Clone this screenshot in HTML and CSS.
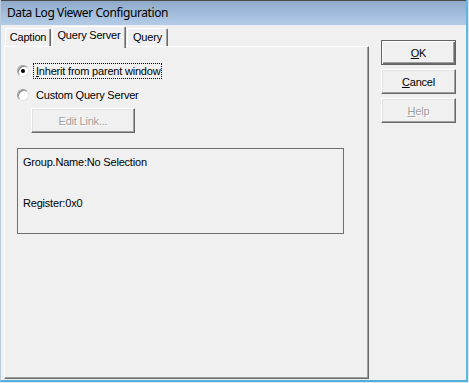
FILE: index.html
```html
<!DOCTYPE html>
<html lang="en">
<head>
    <meta charset="UTF-8">
    <title>Data Log Viewer Configuration</title>
    <link rel="stylesheet" href="styles.css">
</head>
<body>
    <div class="window">
        <div class="titlebar">
            <span class="title">Data Log Viewer Configuration</span>
        </div>
        <div class="client">
            <div class="tabctl">
                <div class="tabstrip">
                    <div class="tab caption">Caption</div>
                    <div class="tab server active">Query Server</div>
                    <div class="tab query">Query</div>
                </div>
                <div class="panel">
                    <div class="radio-row first">
                        <span class="radio checked"></span>
                        <span class="label focus"><u>I</u>nherit from parent window</span>
                    </div>
                    <div class="radio-row second">
                        <span class="radio"></span>
                        <span class="label">Custom Query Server</span>
                    </div>
                    <button class="btn disabled edit">Edit Link...</button>
                    <div class="frame">
                        <p>Group.Name:No Selection</p>
                        <p class="reg">Register:0x0</p>
                    </div>
                </div>
            </div>
            <div class="buttons">
                <button class="btn default"><u>O</u>K</button>
                <button class="btn"><u>C</u>ancel</button>
                <button class="btn disabled"><u>H</u>elp</button>
            </div>
        </div>
    </div>
</body>
</html>
```

FILE: styles.css
```css
*{
    margin: 0;
    padding: 0;
    box-sizing: border-box;
}
body{
    background: #dfe6ee;
    font-family: "Liberation Sans", Arial, sans-serif;
    font-size: 11px;
    letter-spacing: -0.2px;
    color: #000;
}
.window{
    width: 468px;
    height: 382px;
    background: #f0f0f0;
    border-left: 1px solid #b9cbdd;
    border-right: 2px solid #5fb6e0;
    border-bottom: 2px solid #4fb0dc;
    display: flex;
    flex-direction: column;
}
.titlebar{
    height: 25px;
    border-top: 1px solid #4a4a4a;
    background: linear-gradient(#8fa9c7, #a2bcdb 50%, #b3cbe6);
    padding: 4px 0 0 6px;
}
.title{
    font-family: "Noto Sans", "Open Sans", sans-serif;
    font-size: 12px;
    letter-spacing: -0.4px;
    line-height: 16px;
}
.client{
    flex: 1;
    display: flex;
    padding: 1px 0 0 3px;
}
.tabctl{
    width: 365px;
    display: flex;
    flex-direction: column;
}
.tabstrip{
    height: 20px;
    display: flex;
    align-items: flex-start;
}
.tab{
    height: 18px;
    margin-top: 2px;
    margin-left: 1px;
    line-height: 16px;
    text-align: center;
    background: #f0f0f0;
    border-top: 1px solid #fff;
    border-left: 1px solid #fff;
    border-right: 1px solid #696969;
    border-radius: 2px 2px 0 0;
    box-shadow: inset -1px 0 #a0a0a0;
}
.tab.caption{
    width: 46px;
}
.tab.server{
    width: 74px;
}
.tab.query{
    width: 41px;
}
.tab.active{
    height: 22px;
    margin-top: 0;
    line-height: 17px;
    position: relative;
    z-index: 1;
}
.panel{
    flex: 1;
    margin-bottom: 1px;
    border-top: 1px solid #fff;
    border-left: 1px solid #fff;
    border-right: 1px solid #696969;
    border-bottom: 1px solid #696969;
    box-shadow: inset -1px -1px #a0a0a0;
    display: flex;
    flex-direction: column;
    align-items: flex-start;
}
.radio-row{
    height: 16px;
    display: flex;
    align-items: center;
    padding-left: 12px;
}
.radio-row.first{
    margin-top: 16px;
}
.radio-row.second{
    margin-top: 8px;
}
.radio{
    width: 12px;
    height: 12px;
    border-radius: 50%;
    background: #fff;
    border: 1px solid;
    border-color: #a0a0a0 #e3e3e3 #e3e3e3 #a0a0a0;
    box-shadow: inset 1px 1px #8a8a8a;
    position: relative;
}
.radio.checked::after{
    content: "";
    position: absolute;
    left: 3px;
    top: 3px;
    width: 4px;
    height: 4px;
    border-radius: 50%;
    background: #000;
}
.label{
    margin-left: 4px;
    padding: 0 1px 0 2px;
    line-height: 14px;
    border: 1px solid transparent;
}
.label.focus{
    border: 1px dotted #000;
}
.btn{
    font-family: "Liberation Sans", Arial, sans-serif;
    font-size: 11px;
    letter-spacing: -0.2px;
    width: 75px;
    height: 25px;
    background: #f0f0f0;
    color: #000;
    border: 1px solid;
    border-color: #fff #696969 #696969 #fff;
    box-shadow: inset -1px -1px #a0a0a0, inset 1px 1px #e3e3e3;
}
.btn.default{
    border-color: #646464;
    box-shadow: inset 1px 1px #fff, inset -1px -1px #696969, inset -2px -2px #a0a0a0;
}
.btn.disabled{
    color: #a0a0a0;
    text-shadow: 1px 1px #fff;
}
.btn.edit{
    width: 104px;
    margin: 5px 0 0 26px;
}
.frame{
    width: 327px;
    height: 86px;
    margin: 15px 0 0 12px;
    border: 1px solid #6e6e6e;
    padding: 7px 0 0 5px;
    line-height: 13px;
}
.frame .reg{
    margin-top: 28px;
}
.buttons{
    display: flex;
    flex-direction: column;
    gap: 4px;
    margin: 14px 0 0 12px;
}
```
